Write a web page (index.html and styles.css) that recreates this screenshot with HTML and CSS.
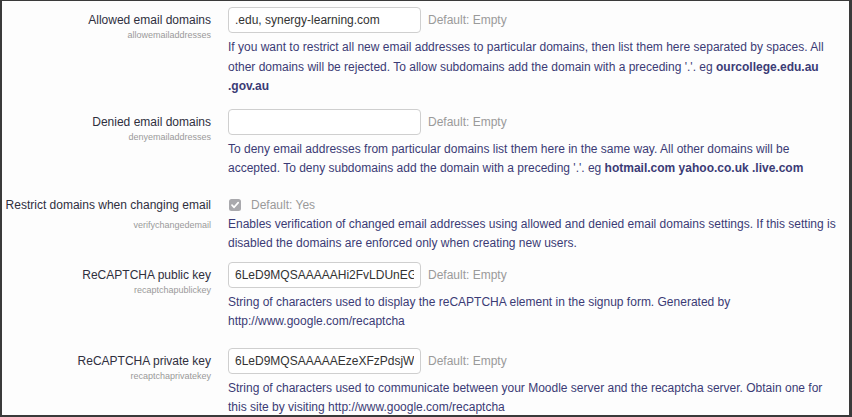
FILE: index.html
```html
<!DOCTYPE html>
<html lang="en">

<head>
  <meta charset="UTF-8">
  <meta name="viewport" content="width=device-width">
  <title>Site policies</title>
  <link rel="stylesheet" href="styles.css">
</head>

<body>
  <div id='admin_frame'>
    <div class='setting'>
      <div class='setting-label'>
        <label for='id_allow'>Allowed email domains</label>
        <span class='setting-name'>allowemailaddresses</span>
      </div>
      <div class='setting-body'>
        <div class='control'>
          <input id='id_allow' type='text' value='.edu, synergy-learning.com'>
          <span class='default'>Default: Empty</span>
        </div>
        <div class='description'>If you want to restrict all new email addresses to particular domains, then list them here separated by spaces. All other domains will be rejected. To allow subdomains add the domain with a preceding '.'. eg <b>ourcollege.edu.au .gov.au</b></div>
      </div>
    </div>

    <div class='setting'>
      <div class='setting-label'>
        <label for='id_deny'>Denied email domains</label>
        <span class='setting-name'>denyemailaddresses</span>
      </div>
      <div class='setting-body'>
        <div class='control'>
          <input id='id_deny' type='text' value=''>
          <span class='default'>Default: Empty</span>
        </div>
        <div class='description'>To deny email addresses from particular domains list them here in the same way. All other domains will be accepted. To deny subdomains add the domain with a preceding '.'. eg <b>hotmail.com yahoo.co.uk .live.com</b></div>
      </div>
    </div>

    <div class='setting setting-check'>
      <div class='setting-label'>
        <label>Restrict domains when changing email</label>
        <span class='setting-name'>verifychangedemail</span>
      </div>
      <div class='setting-body'>
        <div class='control'>
          <svg class='checkbox' width='12' height='12' viewBox='0 0 12 12'>
            <rect x='0' y='0' width='12' height='12' rx='2.5' fill='#a9a9ad'/>
            <path d='M3 6.2 L5.1 8.3 L9.2 3.6' fill='none' stroke='#fff' stroke-width='1.7' stroke-linecap='round' stroke-linejoin='round'/>
          </svg>
          <span class='default'>Default: Yes</span>
        </div>
        <div class='description'>Enables verification of changed email addresses using allowed and denied email domains settings. If this setting is disabled the domains are enforced only when creating new users.</div>
      </div>
    </div>

    <div class='setting setting-wide'>
      <div class='setting-label'>
        <label for='id_pub'>ReCAPTCHA public key</label>
        <span class='setting-name'>recaptchapublickey</span>
      </div>
      <div class='setting-body'>
        <div class='control'>
          <input id='id_pub' type='text' value='6LeD9MQSAAAAAHi2FvLDUnEGXrXJmGsY4kMqTsGt'>
          <span class='default'>Default: Empty</span>
        </div>
        <div class='description'>String of characters used to display the reCAPTCHA element in the signup form. Generated by http://www.google.com/recaptcha</div>
      </div>
    </div>

    <div class='setting'>
      <div class='setting-label'>
        <label for='id_priv'>ReCAPTCHA private key</label>
        <span class='setting-name'>recaptchaprivatekey</span>
      </div>
      <div class='setting-body'>
        <div class='control'>
          <input id='id_priv' type='text' value='6LeD9MQSAAAAAEzeXFzPdsjWlnQvKd2Hs8TqRbYn'>
          <span class='default'>Default: Empty</span>
        </div>
        <div class='description'>String of characters used to communicate between your Moodle server and the recaptcha server. Obtain one for this site by visiting http://www.google.com/recaptcha</div>
      </div>
    </div>
  </div>
</body>

</html>
```

FILE: styles.css
```css
* {
  box-sizing: border-box;
}

html,
body {
  margin: 0;
  padding: 0;
  height: 100%;
  background-color: #fff;
  font-family: 'Liberation Sans', Arial, sans-serif;
  --label-color: #2f2f3d;
  --text-color: #3b3b75;
  --muted: #9a9a9a;
}

#admin_frame {
  height: 417px;
  width: 852px;
  overflow: hidden;
  background-color: #fdfdfd;
  border-style: solid;
  border-color: #3a3a3a;
  border-width: 1px 3px 2px 2px;
  padding: 6px 9px 0 0;
}

.setting {
  display: grid;
  grid-template-columns: 209px 1fr;
  column-gap: 17px;
  margin-bottom: 12px;
}

.setting-label {
  display: flex;
  flex-direction: column;
  align-items: flex-end;
  text-align: right;
}

.setting-label label {
  font-size: 12px;
  line-height: 26px;
  white-space: nowrap;
  color: var(--label-color);
}

.setting-name {
  font-size: 9px;
  line-height: 10px;
  margin-top: -3px;
  color: var(--muted);
}

.control {
  display: flex;
  align-items: center;
  gap: 7px;
  height: 26px;
}

.control input {
  width: 193px;
  height: 26px;
  margin: 0;
  padding: 0 6px;
  border: 1px solid #cfcfcf;
  border-radius: 4px;
  background-color: #fff;
  font-family: 'Liberation Sans', Arial, sans-serif;
  font-size: 12px;
  color: #333;
  outline: none;
}

.default {
  font-size: 12px;
  color: var(--muted);
}

.description {
  margin-top: 5px;
  font-size: 12px;
  line-height: 19.5px;
  color: var(--text-color);
}

.setting-check {
  margin-bottom: 8px;
}

.setting-check .control {
  height: 20px;
  margin-top: 4px;
  gap: 10px;
  padding-left: 1px;
}

.setting-check .setting-label label {
  line-height: 20px;
  margin-top: 4px;
}

.setting-check .setting-name {
  margin-top: 5px;
}

.setting-check .description {
  margin-top: 0;
}

.setting-wide {
  margin-bottom: 16px;
}

.checkbox {
  flex-shrink: 0;
}
```
